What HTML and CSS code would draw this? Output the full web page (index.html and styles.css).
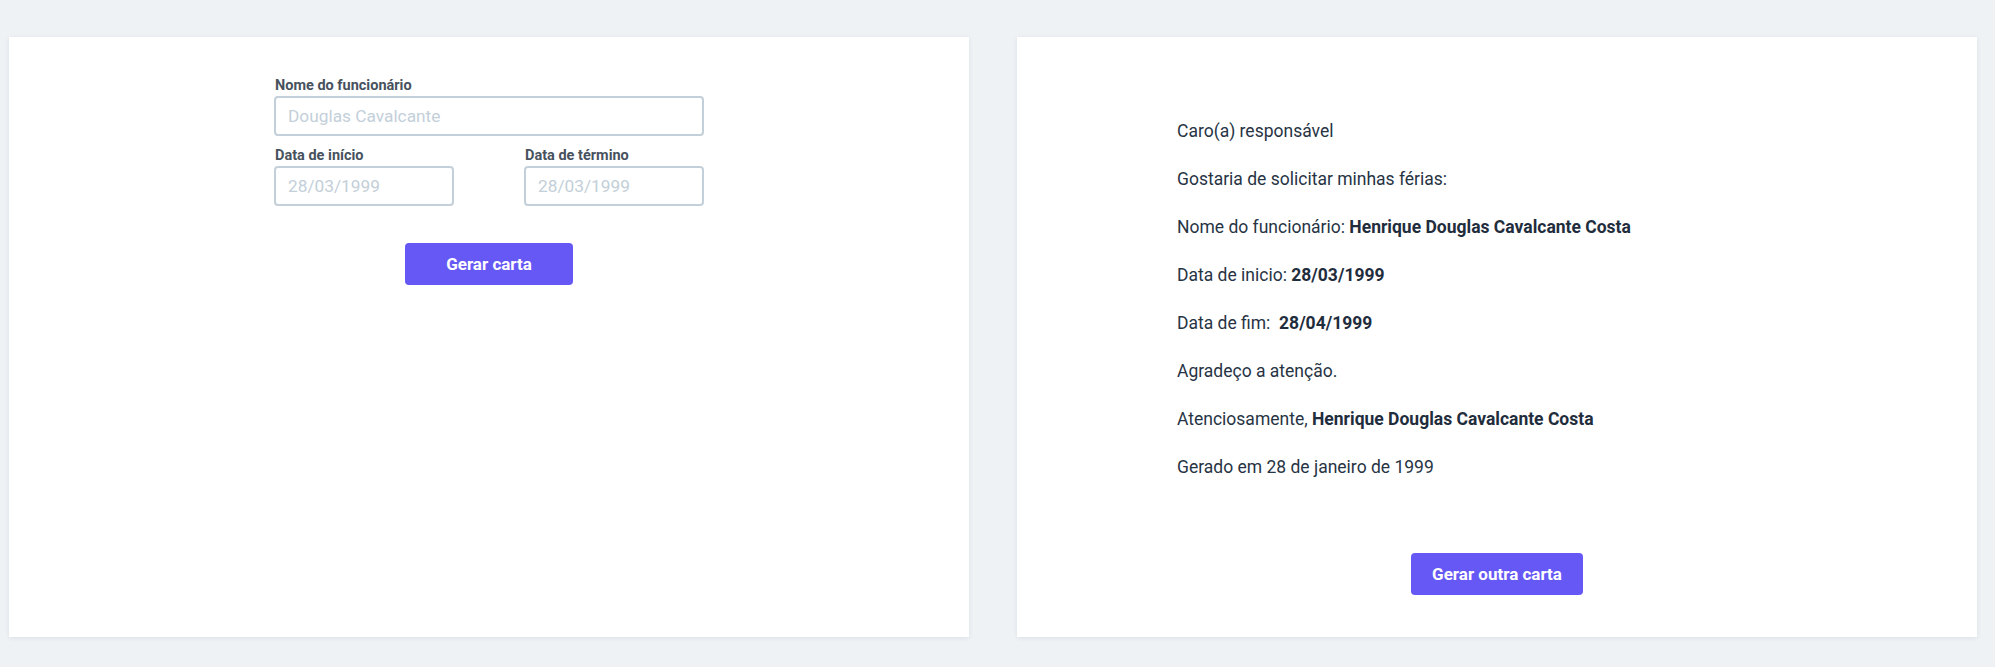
FILE: index.html
```html
<!DOCTYPE html>
<html lang="pt-BR">
<head>
<meta charset="utf-8">
<title>Carta de férias</title>
<link rel="stylesheet" href="styles.css">
</head>
<body>
<main class="page">
  <section class="card form-card">
    <form class="form">
      <label class="field-label" for="nome">Nome do funcionário</label>
      <input class="input" id="nome" type="text" placeholder="Douglas Cavalcante">
      <div class="date-row">
        <div class="date-field">
          <label class="field-label" for="inicio">Data de início</label>
          <input class="input" id="inicio" type="text" placeholder="28/03/1999">
        </div>
        <div class="date-field">
          <label class="field-label" for="fim">Data de término</label>
          <input class="input" id="fim" type="text" placeholder="28/03/1999">
        </div>
      </div>
      <button class="btn btn-gerar" type="button">Gerar carta</button>
    </form>
  </section>
  <section class="card letter-card">
    <div class="letter">
      <p>Caro(a) responsável</p>
      <p>Gostaria de solicitar minhas férias:</p>
      <p>Nome do funcionário: <strong>Henrique Douglas Cavalcante Costa</strong></p>
      <p>Data de inicio: <strong>28/03/1999</strong></p>
      <p>Data de fim:&nbsp; <strong>28/04/1999</strong></p>
      <p>Agradeço a atenção.</p>
      <p>Atenciosamente, <strong>Henrique Douglas Cavalcante Costa</strong></p>
      <p>Gerado em 28 de janeiro de 1999</p>
    </div>
    <button class="btn btn-outra" type="button">Gerar outra carta</button>
  </section>
</main>
</body>
</html>
```

FILE: styles.css
```css
* { box-sizing: border-box; }

html, body {
  margin: 0;
  padding: 0;
  background: #eef2f5;
  font-family: Roboto, "Liberation Sans", sans-serif;
  color: #273444;
}

.page {
  display: flex;
  gap: 48px;
  padding: 37px 0 30px 9px;
}

.card {
  width: 960px;
  height: 600px;
  background: #ffffff;
  box-shadow: 0 1px 4px rgba(60, 80, 100, 0.10);
}

/* ---------- form card ---------- */
.form-card {
  padding-top: 40px;
}

.form {
  width: 430px;
  margin: 0 auto;
  display: flex;
  flex-direction: column;
}

.field-label {
  display: block;
  font-size: 14.5px;
  line-height: 17px;
  font-weight: 700;
  color: #47525e;
  margin-bottom: 2px;
  padding-left: 1px;
}

.input {
  display: block;
  width: 100%;
  height: 40px;
  border: 2px solid #c3cfd9;
  border-radius: 4px;
  padding: 0 12px;
  font-family: Roboto, "Liberation Sans", sans-serif;
  font-size: 17.3px;
  color: #273444;
  background: #ffffff;
  outline: none;
}

.input::placeholder {
  color: #c3cfd9;
  opacity: 1;
}

.date-row {
  display: flex;
  justify-content: space-between;
  margin-top: 11px;
}

.date-field {
  width: 180px;
}

.btn {
  display: block;
  height: 42px;
  border: none;
  border-radius: 4px;
  background: #6558f5;
  color: #ffffff;
  font-family: Roboto, "Liberation Sans", sans-serif;
  font-size: 17px;
  font-weight: 700;
  cursor: pointer;
}

.btn-gerar {
  width: 168px;
  margin: 37px auto 0;
}

/* ---------- letter card ---------- */
.letter-card {
  display: flex;
  flex-direction: column;
  align-items: center;
  padding-top: 82px;
}

.letter {
  width: 640px;
  font-size: 17.5px;
  line-height: 24px;
}

.letter p {
  margin: 0 0 24px;
}

.letter strong {
  font-weight: 700;
  color: #1f2d3d;
}

.btn-outra {
  width: 172px;
  margin-top: 50px;
}
```
